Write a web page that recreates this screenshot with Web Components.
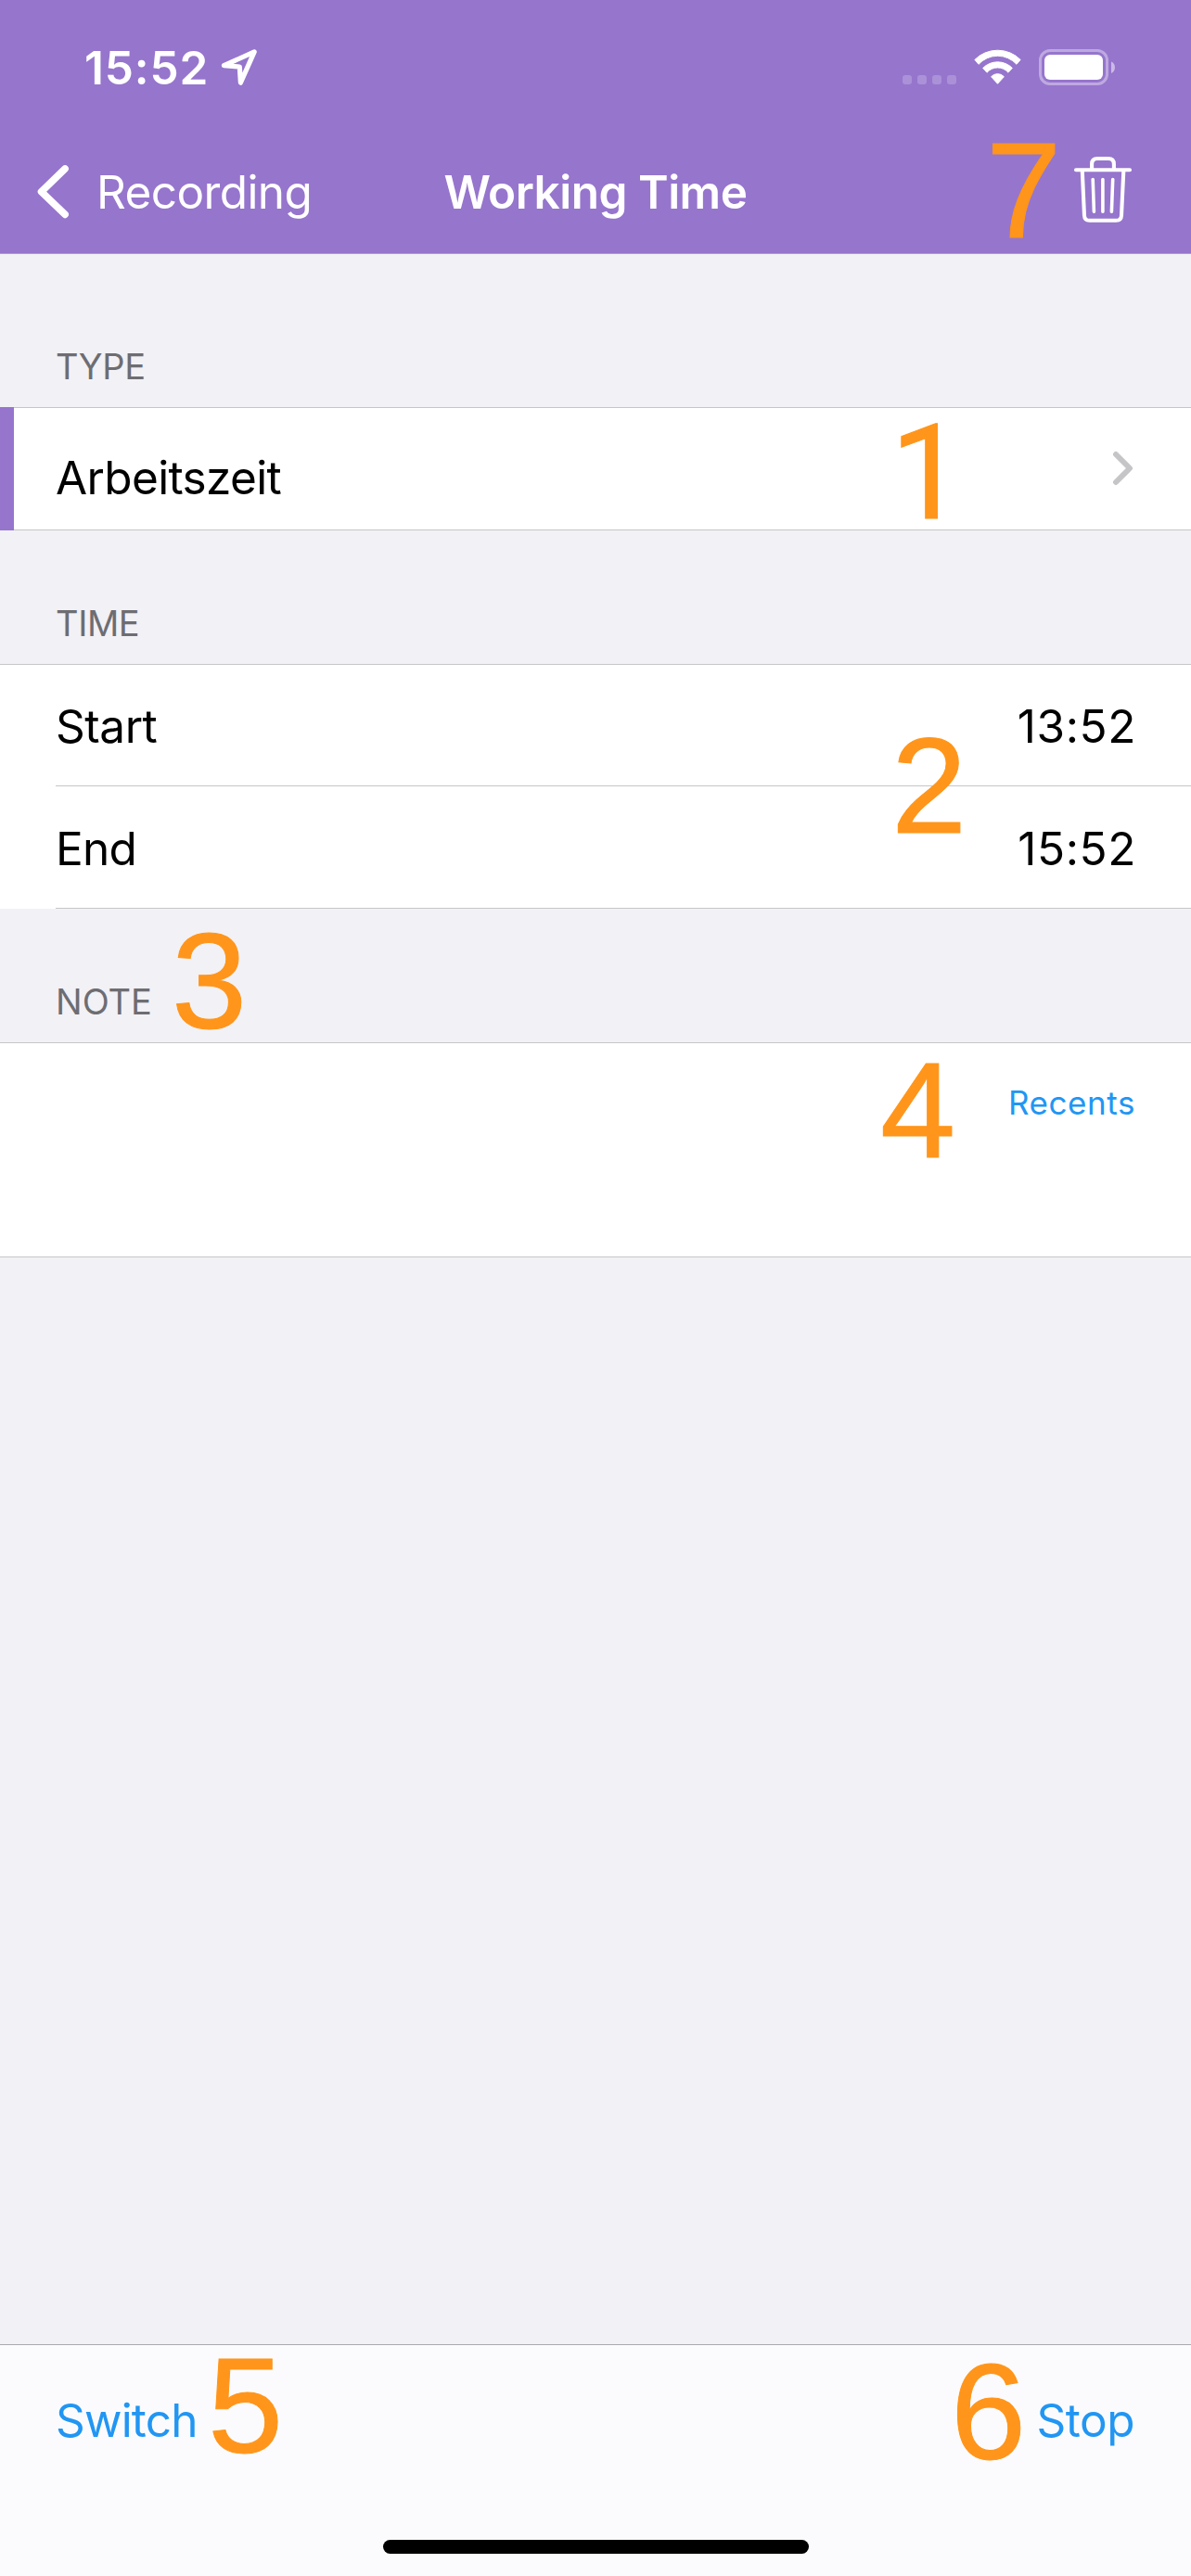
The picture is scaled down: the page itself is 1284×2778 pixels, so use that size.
<!DOCTYPE html>
<html lang="en">
<head>
<meta charset="utf-8">
<title>Working Time</title>
<style>
  html, body { margin: 0; padding: 0; }
  body { width: 1284px; height: 2778px; overflow: hidden; background: #f2f1f6; font-family: Inter, "Liberation Sans", sans-serif; }
</style>
</head>
<body>
<time-screen></time-screen>
<script>
class BaseElement extends HTMLElement {
  constructor() {
    super();
    this.attachShadow({ mode: 'open' });
    this.shadowRoot.innerHTML = '<style>' + this.css() + '</style>' + this.html();
  }
  css() { return ''; }
  html() { return '<slot></slot>'; }
}

// Clock with location arrow on the left; signal, wifi and battery on the right.
customElements.define('status-bar', class extends BaseElement {
  css() { return `
    :host { display: flex; justify-content: space-between; align-items: center; height: 146px; padding: 0 82px 0 91px; box-sizing: border-box; color: #fff; }
    .left { display: flex; align-items: center; gap: 12px; }
    .time { font-size: 49.5px; font-weight: 600; line-height: 60px; letter-spacing: .9px; }
    .right { display: flex; align-items: center; }
    svg { display: block; }`; }
  html() { return `
    <div class="left"><span class="time">15:52</span>
      <svg width="42" height="42" viewBox="238 53 42 42" fill="none" stroke="#fff" stroke-width="5.2" stroke-linejoin="round"><path d="M242.4 71.7 275.2 56.9 260.4 90.2 259.3 73Z"/></svg>
    </div>
    <div class="right">
      <svg width="230" height="44" viewBox="972 51 230 44">
        <g fill="#fff" opacity=".2"><rect x="973" y="81" width="10" height="10" rx="3"/><rect x="989" y="81" width="10" height="10" rx="3"/><rect x="1005" y="81" width="10" height="10" rx="3"/><rect x="1021" y="81" width="10" height="10" rx="3"/></g>
        <g fill="#fff" stroke="#fff" stroke-width="1" stroke-linejoin="round">
          <path d="M1050.9 64.4A34.8 34.8 0 0 1 1100.1 64.4L1096 69.3A27.8 27.8 0 0 0 1055 69.3Z"/>
          <path d="M1059.7 73.4A22.3 22.3 0 0 1 1091.3 73.4L1087 78.2A15.2 15.2 0 0 0 1064 78.2Z"/>
          <path d="M1068.6 82.7A9.3 9.3 0 0 1 1082.4 82.7L1075.5 90.3Z"/>
        </g>
        <rect x="1121.5" y="54.5" width="72" height="36" rx="10.5" fill="none" stroke="#fff" stroke-width="3" opacity=".38"/>
        <rect x="1126" y="59" width="63" height="27" rx="6" fill="#fff"/>
        <path d="M1198 66.5C1200.6 67.6 1202 70 1202 72.7S1200.6 77.8 1198 79Z" fill="#fff" opacity=".5"/>
      </svg>
    </div>`; }
});

customElements.define('nav-bar', class extends BaseElement {
  css() { return `
    :host { display: grid; grid-template-columns: 1fr auto 1fr; align-items: center; height: 127px; padding: 0 62px 5px 38px; box-sizing: border-box; color: #fff; font-size: 49.5px; line-height: 60px; letter-spacing: -.6px; }
    .back { display: flex; align-items: center; gap: 26px; }
    .title { font-weight: 600; position: relative; left: 12px; letter-spacing: -.5px; }
    .action { display: flex; justify-content: flex-end; }
    svg { display: block; }`; }
  html() { return `
    <div class="back">
      <svg width="40" height="62" viewBox="38 176 40 62" fill="none" stroke="#fff" stroke-width="7.7" stroke-linecap="round" stroke-linejoin="round"><path d="M70.1 182 44.6 206.7 70.1 231.3"/></svg>
      <slot name="back"></slot></div>
    <div class="title"><slot></slot></div>
    <div class="action">
      <svg width="66" height="78" viewBox="1156 168 66 78" fill="none" stroke="#fff" stroke-width="4.1" stroke-linecap="round" stroke-linejoin="round">
        <path d="M1160 183.2H1218M1177.1 183V177Q1177.1 171 1183 171H1195Q1200.9 171 1200.9 177V183M1166.8 184.5 1169 232.5Q1169.3 237.8 1174.5 237.8H1203.4Q1208.7 237.8 1209 232.5L1211.3 184.5"/>
        <path stroke-width="3.6" d="M1178.2 193.5 1179.4 228.2M1188.9 193.5V228.2M1199.7 193.5 1198.4 228.2"/>
      </svg></div>`; }
});

customElements.define('app-header', class extends BaseElement {
  css() { return `:host { display: flex; flex-direction: column; background: #9675cd; border-bottom: 1px solid #ab9fc1; }`; }
});

customElements.define('section-label', class extends BaseElement {
  css() { return `:host { display: flex; align-items: flex-end; box-sizing: border-box; height: var(--h, 144px); padding: 0 60px 21px; font-size: 38px; line-height: 46px; letter-spacing: var(--ls, -.4px); color: #6d6d72; }`; }
});

customElements.define('row-group', class extends BaseElement {
  css() { return `:host { display: flex; flex-direction: column; background: #fff; border-top: 1px solid #c6c6c8; }`; }
});

// A label / value line; the hairline below starts at --inset.
customElements.define('list-row', class extends BaseElement {
  css() { return `
    :host { display: flex; height: var(--h, 131px); color: #000; font-size: 49.5px; line-height: 60px; letter-spacing: -.45px; }
    .accent { width: 15px; margin-top: -1px; margin-bottom: -1px; background: var(--accent, transparent); }
    :host([accented]) .accent { margin-bottom: 0; }
    .line { flex: 1; display: flex; justify-content: space-between; align-items: center; box-sizing: border-box; margin-left: calc(var(--inset, 60px) - 15px); padding: var(--drop, 3px) 59px 0 calc(60px - var(--inset, 60px)); border-bottom: 1px solid #c6c6c8; }
    .value { letter-spacing: .6px; }`; }
  html() { return `<div class="accent"></div><div class="line"><slot></slot><span class="value"><slot name="value"></slot></span></div>`; }
});

customElements.define('disclosure-icon', class extends BaseElement {
  css() { return `:host { display: block; margin: 0 0 20px 0; } svg { display: block; }`; }
  html() { return `<svg width="28" height="42" viewBox="1197 484 28 42" fill="none" stroke="#c5c5c7" stroke-width="5.9" stroke-linecap="round" stroke-linejoin="round"><path d="M1203 490 1218 505 1203 520"/></svg>`; }
});

customElements.define('note-field', class extends BaseElement {
  css() { return `
    :host { display: flex; justify-content: flex-end; align-items: flex-start; box-sizing: border-box; height: 231px; padding: 43px 60px 0; border-bottom: 1px solid #c6c6c8; color: #2196f3; font-size: 35px; line-height: 42px; letter-spacing: .55px; }`; }
});

customElements.define('tool-bar', class extends BaseElement {
  css() { return `
    :host { display: flex; flex-direction: column; justify-content: space-between; align-items: center; box-sizing: border-box; height: 250px; padding: 51px 0 24px; background: #fbfbfd; border-top: 1px solid #a9a9ae; color: #2196f3; font-size: 49.5px; line-height: 60px; }
    .actions { width: 100%; display: flex; justify-content: space-between; box-sizing: border-box; padding: 0 61px 0 60px; }
    .home { width: 459px; height: 15px; border-radius: 8px; background: #000; }`; }
  html() { return `<div class="actions"><slot></slot></div><div class="home"></div>`; }
});

// Numbered callout laid over the screen.
customElements.define('callout-mark', class extends BaseElement {
  css() { return `:host { position: absolute; font: 146px/146px "Liberation Sans", Arial, sans-serif; color: #ff951a; white-space: nowrap; -webkit-text-stroke: 1px #ff951a; }
    :host([narrow]) { font: 400 142px/146px Roboto, sans-serif; }`; }
});

customElements.define('time-screen', class extends BaseElement {
  css() { return `
    :host { display: flex; flex-direction: column; position: relative; width: 1284px; height: 2778px; overflow: hidden; background: #f2f1f6; }
    main { flex: 1; display: flex; flex-direction: column; }`; }
  html() { return `
    <app-header>
      <status-bar></status-bar>
      <nav-bar><span slot="back">Recording</span>Working Time</nav-bar>
    </app-header>
    <main>
      <section-label style="--h:165px;--ls:-.4px">TYPE</section-label>
      <row-group><list-row accented style="--accent:#9675cd;--inset:15px;--drop:19px;--h:132px"><span style="letter-spacing:-.65px">Arbeitszeit</span><disclosure-icon slot="value"></disclosure-icon></list-row></row-group>
      <section-label>TIME</section-label>
      <row-group>
        <list-row style="--drop:1px">Start<span slot="value">13:52</span></list-row>
        <list-row style="--h:132px"><span style="letter-spacing:-.75px">End</span><span slot="value">15:52</span></list-row>
      </row-group>
      <section-label style="--ls:0px">NOTE</section-label>
      <row-group><note-field>Recents</note-field></row-group>
    </main>
    <tool-bar><span style="letter-spacing:-.8px">Switch</span><span style="letter-spacing:-.5px">Stop</span></tool-bar>
    <callout-mark narrow style="left:960px;top:438px">1</callout-mark>
    <callout-mark style="left:961px;top:775px">2</callout-mark>
    <callout-mark style="left:185px;top:986px">3</callout-mark>
    <callout-mark style="left:949px;top:1125px">4</callout-mark>
    <callout-mark style="left:224px;top:2522px">5</callout-mark>
    <callout-mark style="left:1025px;top:2529px">6</callout-mark>
    <callout-mark style="left:1063px;top:133px">7</callout-mark>`; }
});
</script>
</body>
</html>
